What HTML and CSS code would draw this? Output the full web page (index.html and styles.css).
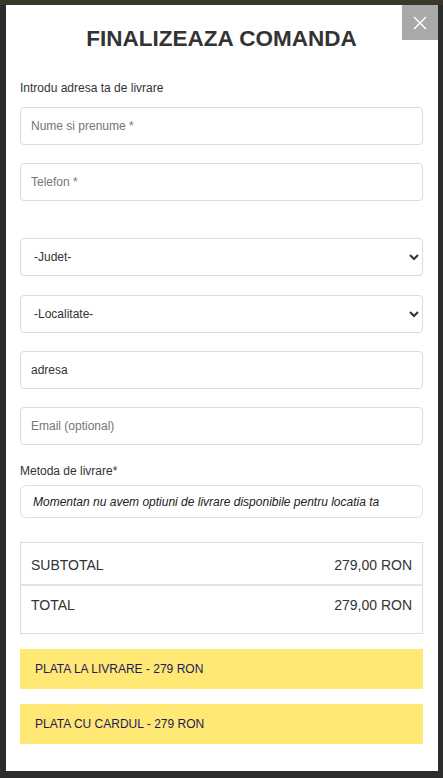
FILE: index.html
```html
<!DOCTYPE html>
<html lang="ro">
<head>
  <meta charset="UTF-8">
  <meta name="viewport" content="width=device-width, initial-scale=1.0">
  <title>Finalizeaza comanda</title>
  <link rel="stylesheet" href="styles.css">
</head>
<body>

  <div class="modal">
    <button class="close-btn" aria-label="Inchide">
      <svg width="14" height="14" viewBox="0 0 14 14">
        <path d="M1 1 L13 13 M13 1 L1 13" stroke="#fff" stroke-width="1.5" fill="none"/>
      </svg>
    </button>

    <h2 class="title">FINALIZEAZA COMANDA</h2>

    <!-- Adresa de livrare -->
    <p class="label">Introdu adresa ta de livrare</p>
    <input class="field" type="text" placeholder="Nume si prenume *">
    <input class="field" type="text" placeholder="Telefon *">

    <div class="spacer"></div>

    <select class="field field-county">
      <option>-Judet-</option>
    </select>
    <select class="field">
      <option>-Localitate-</option>
    </select>
    <input class="field" type="text" value="adresa">
    <input class="field field-last" type="email" placeholder="Email (optional)">

    <!-- Metoda de livrare -->
    <p class="label label-method">Metoda de livrare*</p>
    <div class="notice">Momentan nu avem optiuni de livrare disponibile pentru locatia ta</div>

    <!-- Totaluri -->
    <div class="totals">
      <div class="row row-sub">
        <span>SUBTOTAL</span>
        <span>279,00 RON</span>
      </div>
      <div class="row row-total">
        <span>TOTAL</span>
        <span>279,00 RON</span>
      </div>
    </div>

    <!-- Plata -->
    <button class="pay-btn">PLATA LA LIVRARE - 279 RON</button>
    <button class="pay-btn">PLATA CU CARDUL - 279 RON</button>
  </div>

</body>
</html>
```

FILE: styles.css
```css
* {
    box-sizing: border-box;
}

body {
    margin: 0;
    padding: 5px 5px 0 6px;
    background: #2c2c2a;
    background-image: linear-gradient(#3a3628 0, #3a3628 5px, #2c2c2a 5px);
    font-family: "Liberation Sans", Arial, sans-serif;
    color: #333;
    min-height: 100vh;
}

/* Fereastra */
.modal {
    position: relative;
    background: #fff;
    width: 432px;
    padding: 20px 15px 27px 14px;
    display: flex;
    flex-direction: column;
}

.close-btn {
    position: absolute;
    top: 0;
    right: 0;
    width: 36px;
    height: 35px;
    border: none;
    background: #a9a9a9;
    display: flex;
    align-items: center;
    justify-content: center;
    padding: 0;
    cursor: pointer;
}

/* Titlu */
.title {
    margin: 0;
    font-size: 22.5px;
    line-height: 28px;
    font-weight: bold;
    text-align: center;
    color: #333;
}

.label {
    margin: 27px 0 11px;
    font-size: 12px;
    line-height: 16px;
    color: #333;
}

.label-method {
    margin: 18px 0 6px;
}

/* Campuri */
.field {
    width: 100%;
    height: 38px;
    margin: 0 0 18px;
    padding: 0 10px;
    border: 1px solid #dcdcdc;
    border-radius: 4px;
    background: #fff;
    font-family: inherit;
    font-size: 12px;
    color: #333;
    outline: none;
}

.field::placeholder {
    color: #757575;
}

select.field {
    padding: 0 8px 0 9px;
}

.field-county {
    margin-bottom: 19px;
}

.field-last {
    margin-bottom: 0;
}

.spacer {
    height: 19px;
}

/* Mesaj livrare */
.notice {
    height: 33px;
    padding: 0 12px;
    border: 1px solid #e0e0e0;
    border-radius: 6px;
    display: flex;
    align-items: center;
    font-size: 12px;
    font-style: italic;
    color: #222;
}

/* Totaluri */
.totals {
    margin-top: 24px;
    border: 1px solid #dddddd;
}

.row {
    display: flex;
    justify-content: space-between;
    font-size: 14px;
    line-height: 20px;
    color: #333;
    padding: 12px 10px 9px;
}

.row-total {
    border-top: 2px solid #e3e3e3;
    padding: 9px 10px 18px;
}

/* Butoane plata */
.pay-btn {
    margin-top: 15px;
    height: 40px;
    padding: 0 15px;
    border: none;
    background: #ffe873;
    color: #1a1a5c;
    font-family: inherit;
    font-size: 12px;
    text-align: left;
    cursor: pointer;
}
```
